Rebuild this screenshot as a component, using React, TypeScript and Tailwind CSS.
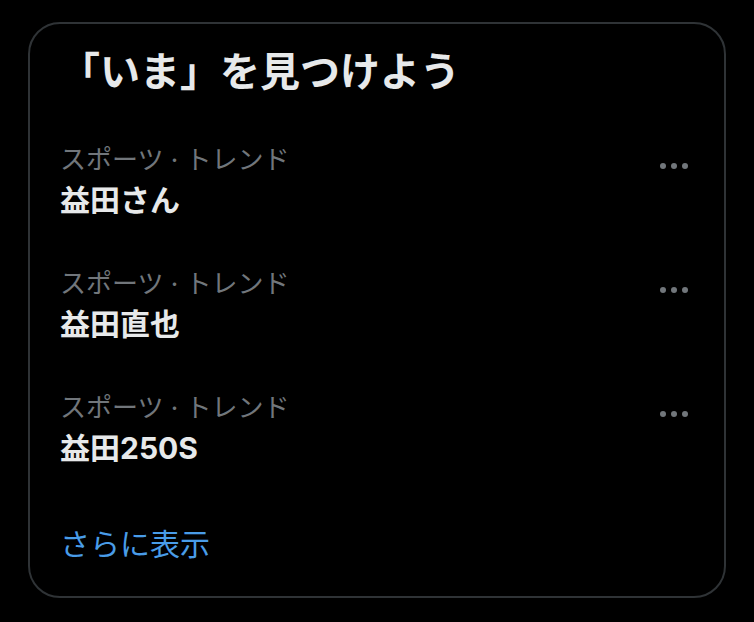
import React from "react";

const trends = [
  { meta: "スポーツ · トレンド", name: "益田さん" },
  { meta: "スポーツ · トレンド", name: "益田直也" },
  { meta: "スポーツ · トレンド", name: "益田250S" },
];

function Dots() {
  return (
    <svg width="38" height="38" viewBox="0 0 38 38" className="shrink-0">
      <circle cx="8" cy="19" r="3" fill="#71767b" />
      <circle cx="19" cy="19" r="3" fill="#71767b" />
      <circle cx="30" cy="19" r="3" fill="#71767b" />
    </svg>
  );
}

export default function App() {
  return (
    <div
      className="w-[754px] h-[622px] bg-black pt-[22px] px-[28px]"
      style={{ fontFamily: 'Inter, "Noto Sans CJK JP", sans-serif' }}
    >
      <div className="w-[698px] border-2 border-[#2f3336] rounded-[32px] bg-black">
        <div className="pl-[30px] pr-[32px] py-[24px]">
          <h2 className="text-[40px] leading-[48px] font-bold text-[#e7e9ea]">「いま」を見つけよう</h2>
        </div>
        {trends.map((t, i) => (
          <div key={i} className="flex items-start justify-between pl-[30px] pr-[32px] py-[24px]">
            <div className="flex flex-col">
              <div className="text-[26px] leading-[32px] text-[#71767b]">{t.meta}</div>
              <div className="pt-[4px] text-[30px] leading-[40px] font-bold text-[#e7e9ea]">{t.name}</div>
            </div>
            <div className="mt-[3px] -mr-[1px]">
              <Dots />
            </div>
          </div>
        ))}
        <div className="pl-[30px] pr-[32px] py-[32px]">
          <span className="text-[30px] leading-[40px] text-[#499ce8]">さらに表示</span>
        </div>
      </div>
    </div>
  );
}
